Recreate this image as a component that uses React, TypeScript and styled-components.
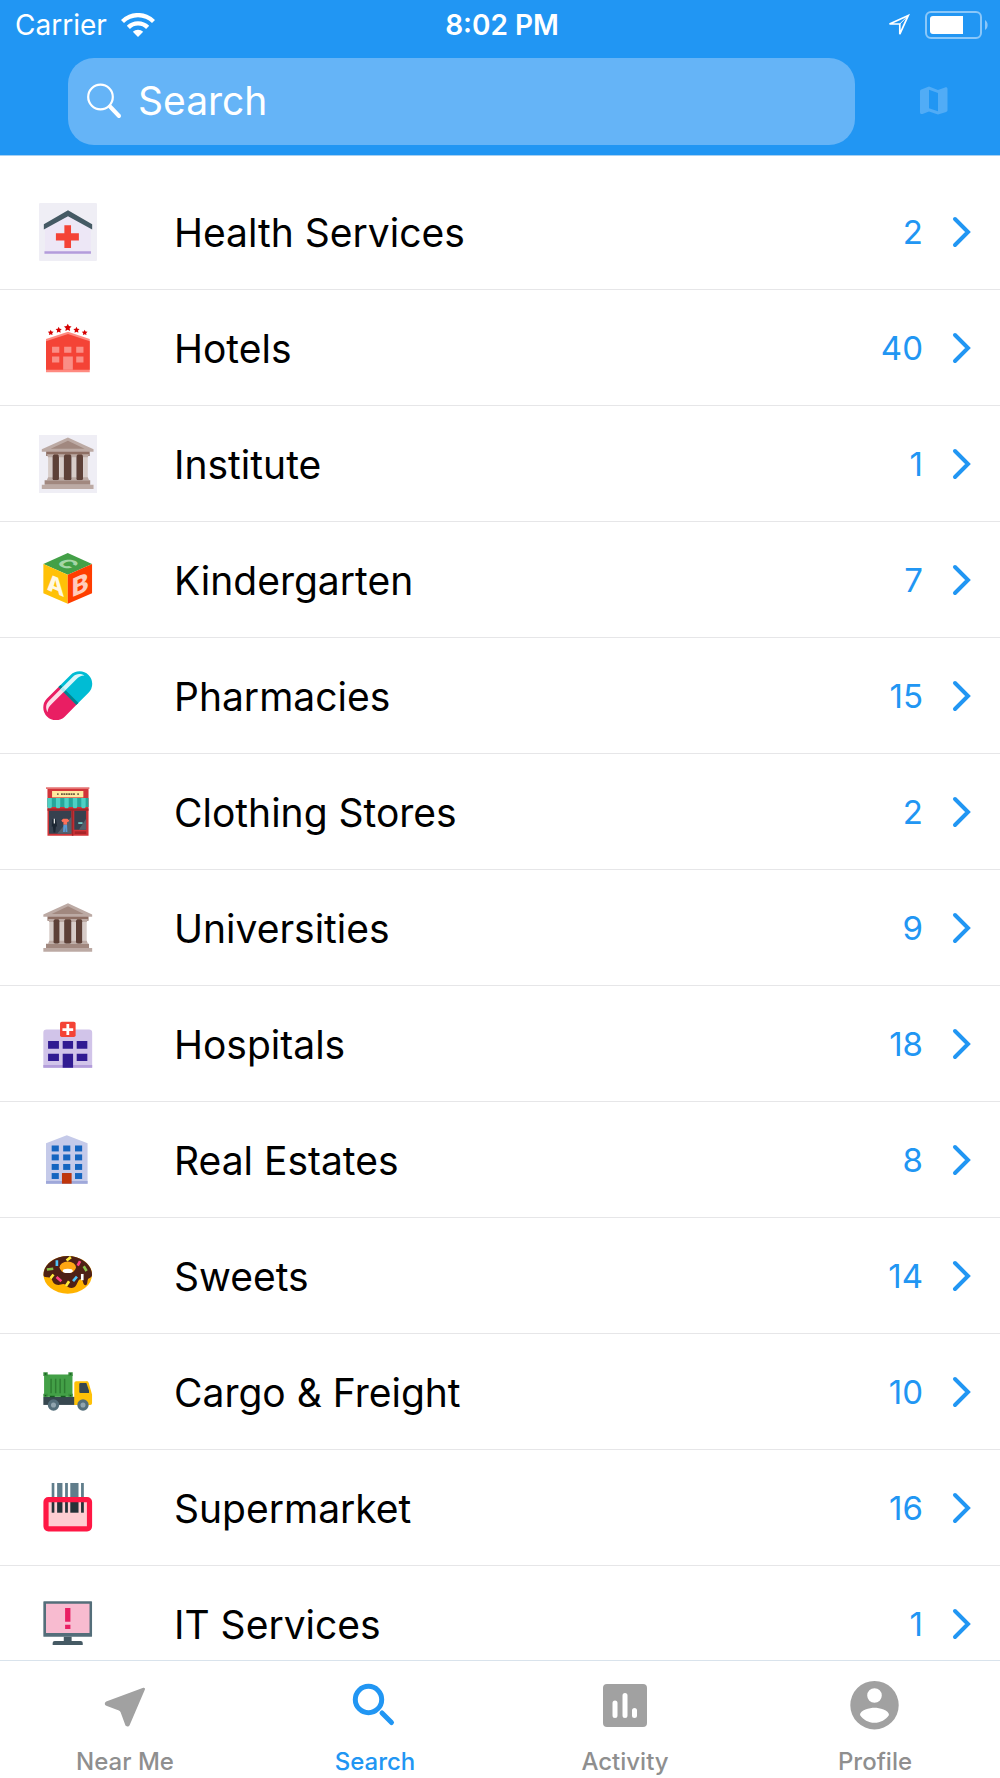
import React from 'react';
import styled, { createGlobalStyle } from 'styled-components';

const BLUE = '#2196f3';
const GREY = '#8f8f8f';

const GlobalStyle = createGlobalStyle`
  * { box-sizing: border-box; }
  body {
    margin: 0;
    background: #fff;
    font-family: Inter, "Liberation Sans", sans-serif;
    color: #000;
  }
`;

const Screen = styled.div`
  display: flex;
  flex-direction: column;
  height: 100vh;
  overflow: hidden;
`;

const Header = styled.header`
  background: ${BLUE};
  border-bottom: 1px solid #a6d0f2;
  flex: none;
`;

const StatusBar = styled.div`
  display: grid;
  grid-template-columns: 1fr auto 1fr;
  align-items: center;
  height: 50px;
  padding: 0 11px 0 15px;
  color: #fff;
  font-size: 28px;
  line-height: 34px;
`;

const StatusGroup = styled.div<{ $end?: boolean }>`
  display: flex;
  align-items: center;
  gap: 14px;
  justify-content: ${p => (p.$end ? 'flex-end' : 'flex-start')};
`;

const Time = styled.time`
  font-weight: 600;
`;

const SearchBar = styled.form`
  display: flex;
  align-items: center;
  padding: 8px 48px 10px 68px;
`;

const SearchField = styled.label`
  display: flex;
  flex: 1;
  align-items: center;
  gap: 16px;
  height: 87px;
  padding: 0 18px 2px;
  border-radius: 26px;
  background: #65b4f7;
`;

const SearchInput = styled.input`
  flex: 1;
  min-width: 0;
  padding: 0;
  border: 0;
  outline: 0;
  background: transparent;
  color: #fff;
  font: inherit;
  font-size: 39px;
  line-height: 48px;
  &::placeholder { color: #fff; opacity: 1; }
`;

const MapButton = styled.button`
  display: flex;
  margin-left: 60px;
  padding: 0 0 2px;
  border: 0;
  background: none;
  color: #51acf6;
`;

const List = styled.ul`
  flex: 1;
  min-height: 0;
  margin: 0;
  padding: 18px 0 0;
  list-style: none;
  overflow-y: auto;
  scrollbar-width: none;
`;

const Item = styled.li`
  border-bottom: 1px solid #e6e6e8;
`;

const RowLink = styled.a`
  display: grid;
  grid-template-columns: 58px 1fr auto 20px;
  align-items: center;
  height: 115px;
  padding: 0 28px 0 39px;
  color: inherit;
  text-decoration: none;
`;

const Title = styled.span`
  padding: 2px 0 0 77px;
  font-size: 39px;
  line-height: 48px;
`;

const Count = styled.span`
  padding-right: 29px;
  color: ${BLUE};
  font-size: 33px;
  line-height: 40px;
`;

const TabBar = styled.nav`
  display: grid;
  grid-template-columns: repeat(4, 1fr);
  flex: none;
  height: 118px;
  border-top: 1px solid #d9e3ec;
  background: #fff;
`;

const Tab = styled.a<{ $active?: boolean }>`
  display: flex;
  flex-direction: column;
  align-items: center;
  gap: 12px;
  padding-top: 14px;
  color: ${p => (p.$active ? BLUE : GREY)};
  font-size: 24px;
  font-weight: 500;
  line-height: 30px;
  text-decoration: none;
`;

const TabIcon = styled.svg`
  width: 60px;
  height: 60px;
  fill: #a1a1a1;
`;

/* Category drawings share one 48-unit grid. */

const Health = () => (
  <>
    <rect width="48" height="48" rx="1" fill="#efeef5" />
    <path d="M5 18 24 8l19 10v24H5z" fill="#ede7f6" />
    <path d="M4 17.6 24 6l20 11.6V22L24 11 4 22z" fill="#455a64" />
    <path d="M4.5 40H43v2H4.5z" fill="#b39ddb" />
    <path d="M21 18.5h5.5V25H33v6h-6.5v6.3H21V31h-7v-6h7z" fill="#f44336" />
  </>
);

const starPoints = (cx: number, cy: number, r: number) =>
  Array.from({ length: 10 }, (_, i) => {
    const a = (Math.PI * i) / 5 - Math.PI / 2;
    const d = i % 2 ? r * 0.5 : r;
    return `${(cx + d * Math.cos(a)).toFixed(2)},${(cy + d * Math.sin(a)).toFixed(2)}`;
  }).join(' ');

const Hotel = () => (
  <>
    {[[9.7, 11.3, 2.5], [16.3, 9.2, 2.7], [23.8, 7.2, 3.3], [31, 9.2, 2.7], [37.8, 11.3, 2.5]].map(([x, y, r]) => (
      <polygon key={x} points={starPoints(x, y, r)} fill="#d50000" />
    ))}
    <path d="M5.8 16.5 24 10.5l18 6V44H5.8z" fill="#ff8a80" />
    <path d="M5.8 18.5 24 12.5l18 6V42H5.8z" fill="#f44336" />
    <path
      d="M10.8 23h6v5h-6zM20.8 23h6v5h-6zM30.8 23h6v5h-6zM10.8 31h6v5h-6zM30.8 31h6v5h-6zM20 31h8v11h-8z"
      fill="#fa8e86"
    />
  </>
);

const Temple = () => (
  <>
    <path d="M7 14h34v4H7z" fill="#8d6e63" />
    <path d="M3.6 12.8 24 3.6l20 9.2v1.9H3.6z" fill="#bcaaa4" />
    <path d="M10.5 12.4 24 6l13 6.4z" fill="#a1887f" />
    {[8.5, 17.2, 27, 36].map(x => (
      <g key={x}>
        <path d={`M${x} 18h3.5v18h-3.5z`} fill="#d7ccc8" />
        <path d={`M${x - 1} 16.6h5.5l-1 2.4h-3.5zM${x} 34.5h3.5l1 2.5h-5.5z`} fill="#bcaaa4" />
      </g>
    ))}
    <rect x="12" y="17" width="5" height="20" rx="1.5" fill="#5d4037" />
    <rect x="20.8" y="17" width="6" height="20" rx="1.5" fill="#5d4037" />
    <rect x="30.6" y="17" width="5.2" height="20" rx="1.5" fill="#5d4037" />
    <path d="M5.8 37h35.6v3.5H5.8z" fill="#a1887f" />
    <path d="M3.6 40.5H44v3.2H3.6z" fill="#bcaaa4" />
  </>
);

const Institute = () => (
  <>
    <rect width="48" height="48" fill="#efeef5" />
    <g transform="translate(-1.5 -1.7) scale(1.06)">
      <Temple />
    </g>
  </>
);

const Blocks = () => (
  <>
    <path d="m23.8 1.7 20.1 9.1-20.1 8.8L3.6 10.8z" fill="#43a047" />
    <path d="m3.6 10.8 20.2 8.8v24L3.6 35z" fill="#ffc107" />
    <path d="m43.9 10.8-20.1 8.8v24L43.9 35z" fill="#ff3d00" />
    <g fontFamily="Inter, sans-serif" fontWeight="800" textAnchor="middle">
      <text transform="matrix(1 .44 0 1 13.8 35)" fontSize="19" fill="#fff8e1">A</text>
      <text transform="matrix(1 -.44 0 1 34 35.5)" fontSize="21" fill="#ffccbc">B</text>
      <text transform="matrix(.85 .4 -.85 .4 18.9 13)" fontSize="17" fill="#a5d6a7">C</text>
    </g>
  </>
);

const Pill = () => (
  <g transform="translate(23.8 23.7) rotate(-45)">
    <path d="M0-10.5h-13.8a10.5 10.5 0 0 0 0 21H0z" fill="#e91e63" />
    <path d="M0-10.5h13.8a10.5 10.5 0 0 1 0 21H0z" fill="#00bcd4" />
    <path d="M-.5-10.5h2.5v21H-.5z" fill="#00838f" />
    <path
      d="M-21.5-2c1-4 4-6 7.5-6h28c3.5 0 6.500 2 7.500 6-2-2-4-2.500-7.500-2.500h-28c-3.500 0-5.500.5-7.500 2.500z"
      fill="#fff"
      opacity=".85"
    />
    <path d="M-.5-8h2.5v3.5H-.5z" fill="#b2ebf2" />
  </g>
);

const Shop = () => (
  <>
    <path d="M7 5h34v38.6H7z" fill="#d13438" />
    <path d="M5.800 3.600h35.900V5H5.800z" fill="#e57373" />
    <path d="M10.800 6.600h25.900v5.300H10.800z" fill="#ffe9a0" />
    <path d="M15 9.200h1.200m2 0h11.500m2 0H33" stroke="#6d5a3f" strokeWidth="1.400" strokeDasharray="1.500 .5" />
    <path d="M7 12.400h34v7.400H7z" fill="#26a69a" />
    {[7, 14, 21, 28, 35].map(x => (
      <path key={x} d={`M${x} 12.4h3.6v7a1.8 1.8 0 0 1-3.6 0z`} fill="#4dd0c4" />
    ))}
    <path d="M7 21h34v2H7zM27.2 21h1.2v22.600h-1.200z" fill="#a62529" />
    <path d="M8.300 23h18.500v19H8.300zM29.200 23H39v15.600h-9.800z" fill="#37414f" />
    <path d="m15 42 11.800-14v14zM33 38.600l6-9v9z" fill="#55606c" />
    <path d="M11 30h3l1 6h-1l-.5 5h-1.500l-.5-5h-1z" fill="#1c2733" />
    <path d="M12.200 29.500h1v4h-1z" fill="#eee" />
    <path d="m18.500 31 1.500-1.500h3.500L25 31l-1 1.500-.8-.5v2.500h-3V32l-.7.5z" fill="#ff7058" />
    <path d="M20.200 34.500h3l.3 6H22l-.3-4-.3 4h-1.500z" fill="#5a9bd5" />
    <path d="M32.500 32.500h3.500v1.300h-3.500z" fill="#80e0d8" />
    <path d="M29.500 40H39v2.200h-9.500z" fill="#a62529" />
  </>
);

const Hospital = () => (
  <>
    <path d="M3.6 14.5a2.6 2.6 0 0 1 2.6-2.6h35.200a2.6 2.6 0 0 1 2.6 2.6v29.100H3.6z" fill="#d1c4e9" />
    <path d="M3.6 41.4H44v2.2H3.6z" fill="#b39ddb" />
    <rect x="17.4" y="5.5" width="12.9" height="12.7" rx="1.5" fill="#f44336" />
    <path d="M22.7 7.500h2.300V11h3.300v2.300H25v3.200h-2.300v-3.200h-3.300V11h3.300z" fill="#fff" />
    <path
      d="M7.500 21.500h9V28h-9zM19.600 21.500h8.600V28h-8.600zM31.200 21.500h8.800V28h-8.800zM7.500 32h9v6h-9zM31.200 32h8.800v6h-8.800zM19.600 32h8.600v11.600h-8.600z"
      fill="#311b92"
    />
  </>
);

const Estate = () => (
  <>
    <path d="M5.8 10.2 23 3.6l17.200 6.600v33.400H5.800z" fill="#c5cae9" />
    <path d="M5.8 41.4h34.400v2.200H5.800z" fill="#9fa8da" />
    {[12, 19.4, 27.3, 34.8].map(y =>
      [10.5, 20, 29.8].map(x => <rect key={`${x}-${y}`} x={x} y={y} width="5.9" height="4.9" fill="#1565c0" />)
    )}
    <path d="M19 34.8h8v8.800h-8z" fill="#bf360c" />
  </>
);

const Donut = () => (
  <>
    <ellipse cx="23.8" cy="23" rx="20.1" ry="15.6" fill="#ffb300" />
    <path
      d="M3.700 23C3.700 14.400 12.700 7.400 23.800 7.400S43.900 14.400 43.900 23c0 2.500-2.200 2.500-3.200 3.500-1 1.500-.2 5-2.200 5.200-2.500 0-1.500-5-4-5-2 0-2 2-3.500 4.500-1.500 3-4.500 3.300-7 2-2-1-2-2.600-4-2.600-2 0-3 1.400-6 .4-3.300-1.200-2.500-4.500-5-5.500-2-.8-5.300.5-5.300-2.500z"
      fill="#4e2015"
    />
    <ellipse cx="23.8" cy="16.8" rx="6.8" ry="4.8" fill="#ffa614" />
    <ellipse cx="23.8" cy="19.8" rx="4.200" ry="1.700" fill="#fff" />
    <g strokeWidth="2.2" fill="none">
      <path d="m22.800 11.200 3.600-2.800M9.500 26l2.500-3.200M22.300 32.300l2.600-4" stroke="#ffeb3b" />
      <path d="m32 15.400 2-3.800M14.500 24.800l4 3.600" stroke="#ff4081" />
      <path d="M14.800 11v4.800M28.200 28.300l3.200-3.700" stroke="#4fc3f7" />
      <path d="M6.500 18.600 11.800 18M37 16l2.400 3.800" stroke="#8bc34a" />
      <path d="M35.800 22.300v5.200" stroke="#fff" />
    </g>
  </>
);

const Truck = () => (
  <>
    <path d="M3.6 28h26v6.700h-26z" fill="#37474f" />
    <path d="M4.200 9.500h23.500V28H4.200z" fill="#43a047" />
    <path d="M3.600 7.700h3.600v3H3.600zM24.300 7.700h3.600v3h-3.600zM3.600 25.500h3.600V28H3.600zM24.300 25.500h3.600V28h-3.600z" fill="#388e3c" />
    <path
      d="M4.800 8.500h1.200v1.200H4.800zM25.500 8.500h1.200v1.200h-1.200zM4.800 26.400h1.200v1.200H4.800zM25.500 26.400h1.200v1.200h-1.200zM9 27h4v1.400H9zM18 27h4v1.400h-4z"
      fill="#155c20"
    />
    <path d="M10 13v12m3.800-12v12m3.700-12v12m3.700-12v12" stroke="#2e7d32" strokeWidth="1.2" />
    <path
      d="M29.200 34.800V16.500a1.500 1.500 0 0 1 1.500-1.500h8.500a2 2 0 0 1 2 1.500l2.700 9.500v7.300a1.500 1.500 0 0 1-1.500 1.500z"
      fill="#ffc107"
    />
    <path d="M33.300 17.500a1 1 0 0 1 1-1h4.900l2.200 6.500v1.800h-7.100a1 1 0 0 1-1-1z" fill="#37474f" />
    {[12, 36.4].map(x => (
      <g key={x}>
        <circle cx={x} cy="34.8" r="4.7" fill="#546e7a" />
        <circle cx={x} cy="34.8" r="2.1" fill="#90a4ae" />
      </g>
    ))}
  </>
);

const Barcode = () => (
  <>
    <rect x="5.8" y="17" width="36" height="24.2" rx="2" fill="#ffcdd2" />
    {[[10.5, 2.2], [15, 4.4], [21.6, 2.3], [25.9, 6.8], [34.8, 2.3]].map(([x, w]) => (
      <g key={x}>
        <rect x={x} y="3.3" width={w} height="12" fill="#607d8b" />
        <rect x={x} y="17" width={w} height="10.9" fill="#263238" />
      </g>
    ))}
    <rect x="5.8" y="17" width="36" height="24.2" rx="2" fill="none" stroke="#ff1744" strokeWidth="4.3" />
  </>
);

const Monitor = () => (
  <>
    <rect x="3.6" y="5.2" width="40.3" height="29.4" rx=".5" fill="#546e7a" />
    <path d="M5.800 7.300h36v24.200h-36z" fill="#f8bbd0" />
    <path d="M21.600 10.800H26v11.300h-4.400zM21.600 24.600H26v3.500h-4.400z" fill="#e91e63" />
    <path d="M20.500 34.600H27V38h7.500a1.700 1.700 0 0 1 1.700 1.700v1.700H11.300v-1.700A1.700 1.700 0 0 1 13 38h7.500z" fill="#455a64" />
  </>
);

const categories: { name: string; count: number; Icon: React.FC }[] = [
  { name: 'Health Services', count: 2, Icon: Health },
  { name: 'Hotels', count: 40, Icon: Hotel },
  { name: 'Institute', count: 1, Icon: Institute },
  { name: 'Kindergarten', count: 7, Icon: Blocks },
  { name: 'Pharmacies', count: 15, Icon: Pill },
  { name: 'Clothing Stores', count: 2, Icon: Shop },
  { name: 'Universities', count: 9, Icon: Temple },
  { name: 'Hospitals', count: 18, Icon: Hospital },
  { name: 'Real Estates', count: 8, Icon: Estate },
  { name: 'Sweets', count: 14, Icon: Donut },
  { name: 'Cargo & Freight', count: 10, Icon: Truck },
  { name: 'Supermarket', count: 16, Icon: Barcode },
  { name: 'IT Services', count: 1, Icon: Monitor },
];

const WifiIcon = () => (
  <svg width="34" height="24" viewBox="0 0 34 24" fill="#fff" aria-hidden="true">
    <path d="M17 24l-5.200-5.200a7.500 7.500 0 0 1 10.400 0z" />
    <path d="M0 7A24 24 0 0 1 34 7l-3 3.100a19.800 19.800 0 0 0-28 0zM5.800 12.800a15.900 15.900 0 0 1 22.400 0l-3.100 3.100a11.500 11.500 0 0 0-16.200 0z" />
  </svg>
);

const LocationIcon = () => (
  <svg width="25" height="25" viewBox="0 0 25 25" fill="none" stroke="#fff" strokeWidth="1.700" aria-hidden="true">
    <path d="M22.300 2.400 3.500 11h10.300v10.200z" />
    <path d="M22.300 2.400 13.800 11" strokeWidth="1" />
  </svg>
);

const BatteryIcon = () => (
  <svg width="64" height="28" viewBox="0 0 64 28" aria-hidden="true">
    <rect x="1" y="1" width="55" height="26" rx="5" fill="none" stroke="#8ac7f9" strokeWidth="2" />
    <path d="M60 9c3.500 2 3.500 8 0 10z" fill="#8ac7f9" />
    <path d="M8 5h30v18H8a3 3 0 0 1-3-3V8a3 3 0 0 1 3-3z" fill="#fff" />
  </svg>
);

const Chevron = () => (
  <svg width="20" height="32" viewBox="0 0 20 32" fill="none" stroke={BLUE} strokeWidth="4" strokeLinecap="round" aria-hidden="true">
    <path d="m3 3 13 13L3 29" />
  </svg>
);

const tabs = [
  {
    label: 'Near Me',
    path: 'M48.300 12.800c1.100-.4 2 .5 1.600 1.700L34.600 50.200c-.8 1.800-3.600 1.800-4.300-.1L25.600 37.300a3 3 0 0 0-1.700-1.700l-12.600-4.800c-2-.8-2-3.500-.1-4.300z',
  },
  { label: 'Search', path: '' },
  {
    label: 'Activity',
    path: 'M12 9h36a4 4 0 0 1 4 4v35a4 4 0 0 1-4 4H12a4 4 0 0 1-4-4V13a4 4 0 0 1 4-4zM20 25.500a2.500 2.500 0 0 0-2.500 2.500v12.500a2.500 2.500 0 0 0 5 0V28a2.500 2.500 0 0 0-2.500-2.500zM30 18a2.500 2.500 0 0 0-2.500 2.500v20a2.500 2.500 0 0 0 5 0v-20A2.500 2.500 0 0 0 30 18zM39.500 33a2.500 2.500 0 0 0-2.500 2.500v5a2.500 2.500 0 0 0 5 0v-5a2.500 2.500 0 0 0-2.500-2.500z',
  },
  {
    label: 'Profile',
    path: 'M29.500 6a24.200 24.200 0 1 0 0 48.400 24.200 24.200 0 0 0 0-48.400zm0 7.200a7.300 7.300 0 1 1 0 14.600 7.300 7.300 0 0 1 0-14.600zm0 34.500c-6 0-11.400-3.100-14.500-7.800 0-4.800 9.700-7.100 14.500-7.100s14.500 2.300 14.500 7.100c-3.100 4.700-8.500 7.800-14.500 7.800z',
  },
];

export default function App() {
  return (
    <Screen>
      <GlobalStyle />
      <Header>
        <StatusBar>
          <StatusGroup>
            <span>Carrier</span>
            <WifiIcon />
          </StatusGroup>
          <Time>8:02 PM</Time>
          <StatusGroup $end>
            <LocationIcon />
            <BatteryIcon />
          </StatusGroup>
        </StatusBar>
        <SearchBar role="search">
          <SearchField>
            <svg width="36" height="36" viewBox="0 0 36 36" fill="none" stroke="#fff" strokeLinecap="round" aria-hidden="true">
              <circle cx="14.5" cy="14" r="12.300" strokeWidth="2.200" />
              <path d="m24 23.500 9 9.500" strokeWidth="4" />
            </svg>
            <SearchInput type="text" placeholder="Search" aria-label="Search" />
          </SearchField>
          <MapButton type="button" aria-label="Map">
            <svg width="37" height="37" viewBox="0 0 37 37" fill="currentColor" fillRule="evenodd" aria-hidden="true">
              <path d="M14 4.500 23 8l7-2.600c1.500-.5 2.500.2 2.500 1.600v21c0 1-.5 1.600-1.300 1.900L23 32.500 14 29.500 7.500 31.900C6 32.400 5 31.700 5 30.300V9.500c0-1 .5-1.700 1.300-2zm0 3.300v18.400l9 3V11z" />
            </svg>
          </MapButton>
        </SearchBar>
      </Header>
      <List>
        {categories.map(({ name, count, Icon }) => (
          <Item key={name}>
            <RowLink href="#">
              <svg width="58" height="58" viewBox="0 0 48 48" aria-hidden="true">
                <Icon />
              </svg>
              <Title>{name}</Title>
              <Count>{count}</Count>
              <Chevron />
            </RowLink>
          </Item>
        ))}
      </List>
      <TabBar>
        {tabs.map(({ label, path }) => (
          <Tab key={label} href="#" $active={label === 'Search'}>
            <TabIcon viewBox="0 0 60 60" fillRule="evenodd" aria-hidden="true">
              {path ? (
                <path d={path} />
              ) : (
                <g fill="none" stroke={BLUE} strokeWidth="5" strokeLinecap="round">
                  <circle cx="23.500" cy="24.500" r="13.200" />
                  <path d="m37 38 9.500 9.500" />
                </g>
              )}
            </TabIcon>
            {label}
          </Tab>
        ))}
      </TabBar>
    </Screen>
  );
}
